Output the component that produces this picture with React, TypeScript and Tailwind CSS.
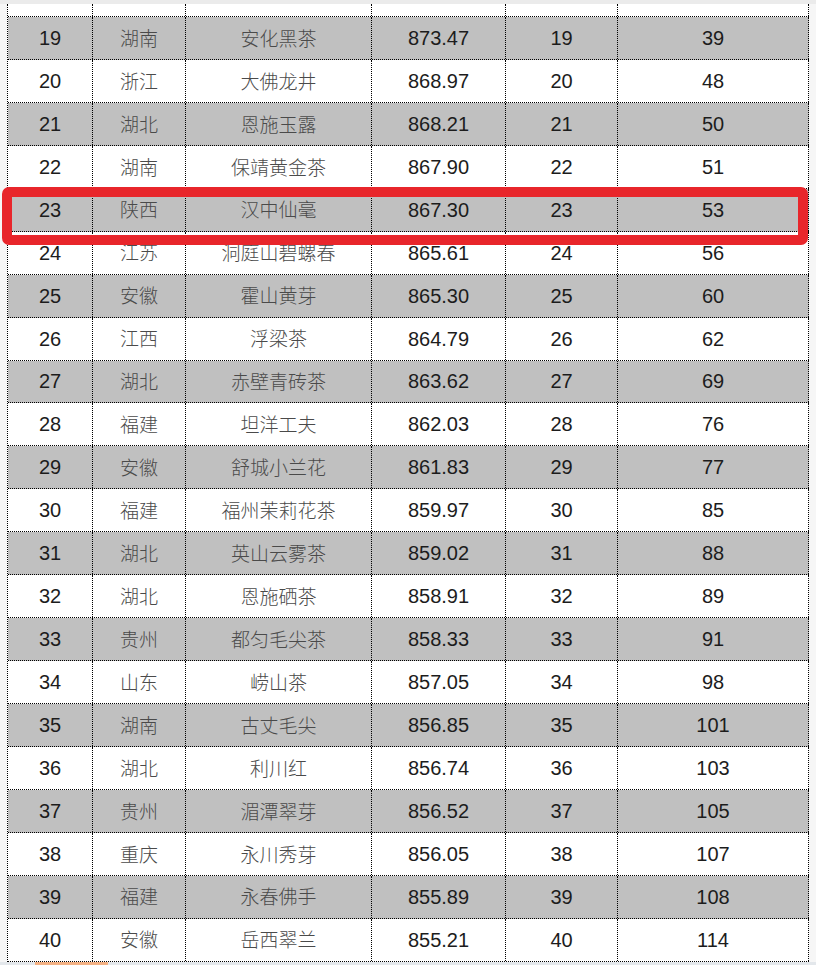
import React from 'react';

type Row = [number, string, string, string, number, number];

const ROWS: Row[] = [
  [19, '湖南', '安化黑茶', '873.47', 19, 39],
  [20, '浙江', '大佛龙井', '868.97', 20, 48],
  [21, '湖北', '恩施玉露', '868.21', 21, 50],
  [22, '湖南', '保靖黄金茶', '867.90', 22, 51],
  [23, '陕西', '汉中仙毫', '867.30', 23, 53],
  [24, '江苏', '洞庭山碧螺春', '865.61', 24, 56],
  [25, '安徽', '霍山黄芽', '865.30', 25, 60],
  [26, '江西', '浮梁茶', '864.79', 26, 62],
  [27, '湖北', '赤壁青砖茶', '863.62', 27, 69],
  [28, '福建', '坦洋工夫', '862.03', 28, 76],
  [29, '安徽', '舒城小兰花', '861.83', 29, 77],
  [30, '福建', '福州茉莉花茶', '859.97', 30, 85],
  [31, '湖北', '英山云雾茶', '859.02', 31, 88],
  [32, '湖北', '恩施硒茶', '858.91', 32, 89],
  [33, '贵州', '都匀毛尖茶', '858.33', 33, 91],
  [34, '山东', '崂山茶', '857.05', 34, 98],
  [35, '湖南', '古丈毛尖', '856.85', 35, 101],
  [36, '湖北', '利川红', '856.74', 36, 103],
  [37, '贵州', '湄潭翠芽', '856.52', 37, 105],
  [38, '重庆', '永川秀芽', '856.05', 38, 107],
  [39, '福建', '永春佛手', '855.89', 39, 108],
  [40, '安徽', '岳西翠兰', '855.21', 40, 114],
];

const num = "font-['Liberation_Sans',Arial,sans-serif] text-[20px] text-[#1c1c1c]";
const cjk = "font-['Noto_Sans_CJK_SC',sans-serif] text-[19px] text-[#4a4a4a] font-light";
const cell = 'flex items-center justify-center h-full border-r border-dotted border-black';

const App: React.FC = () => {
  return (
    <div className="relative w-[816px] h-[965px] overflow-hidden bg-[#f6f6f6]">
      <div className="h-[4px] bg-[#ebebeb]" />
      <div className="ml-[7px] w-[802px] border-l border-dotted border-black bg-white">
        {/* partial row from above */}
        <div className="flex h-[13px] border-b border-dotted border-black">
          <div className={`${cell} w-[85px]`} />
          <div className={`${cell} w-[93px]`} />
          <div className={`${cell} w-[186px]`} />
          <div className={`${cell} w-[134px]`} />
          <div className={`${cell} w-[112px]`} />
          <div className={`${cell} w-[191px]`} />
        </div>
        {ROWS.map((r, i) => (
          <div
            key={r[0]}
            className={`flex h-[42.95px] border-b border-dotted border-black ${i % 2 === 0 ? 'bg-[#c0c0c0]' : 'bg-white'}`}
          >
            <div className={`${cell} w-[85px] ${num}`}>{r[0]}</div>
            <div className={`${cell} w-[93px] ${cjk}`}>{r[1]}</div>
            <div className={`${cell} w-[186px] ${cjk}`}>{r[2]}</div>
            <div className={`${cell} w-[134px] ${num}`}>{r[3]}</div>
            <div className={`${cell} w-[112px] ${num}`}>{r[4]}</div>
            <div className={`${cell} w-[191px] ${num}`}>{r[5]}</div>
          </div>
        ))}
      </div>
      <div className="flex h-[4px] bg-[#e3e7eb]">
        <div className="ml-[35px] w-[73px] bg-[#f3b184]" />
      </div>

      {/* red highlight around row 23 */}
      <div className="absolute left-[2px] top-[187px] w-[806px] h-[58px] rounded-[7px] border-[10px] border-[#e8262b]" />
    </div>
  );
};

export default App;
